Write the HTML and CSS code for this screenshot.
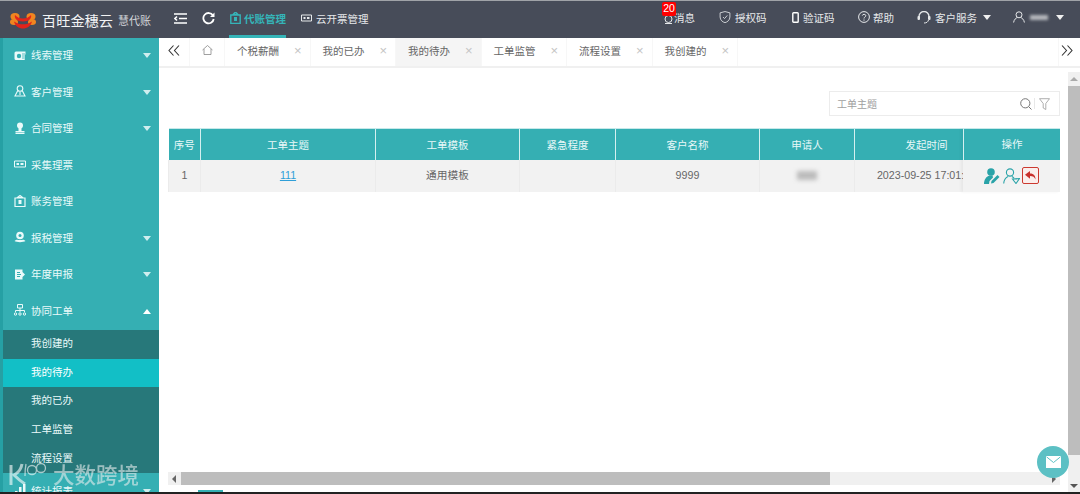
FILE: index.html
```html
<!DOCTYPE html>
<html lang="zh-CN">
<head>
    <meta charset="UTF-8">
    <title>百旺金穗云</title>
    <link rel="stylesheet" href="styles.css">
</head>
<body>

    <!-- Top bar -->
    <div class="topbar">
        <div class="brand">
            <svg class="brand-logo" viewBox="0 0 26 17">
                <ellipse cx="5" cy="4.500" rx="4.500" ry="3.500" fill="#f0851f"/>
                <ellipse cx="21" cy="4.500" rx="4.500" ry="3.500" fill="#f0851f"/>
                <ellipse cx="4" cy="10" rx="4" ry="3" fill="#f0851f"/>
                <ellipse cx="22" cy="10" rx="4" ry="3" fill="#f0851f"/>
                <path d="M5 3c2 2.500 5 3.500 8 3.500S19 5.500 21 3c1 3-2 6.500-8 6.500S4 6 5 3z" fill="#e2231a"/>
                <path d="M4 9.500c3 2 6 2.800 9 2.800s6-.8 9-2.800c-1 4.500-5 7-9 7s-8-2.500-9-7z" fill="#e2231a"/>
            </svg>
            <span class="brand-name">百旺金穗云</span>
            <span class="brand-sub">慧代账</span>
        </div>
        <svg class="tool-icon indent" viewBox="0 0 13 11"><path d="M0 1h13M5 5.500h8M0 10h13M3 3.500 1 5.500l2 2" fill="none" stroke="#fff" stroke-width="1.600"/></svg>
        <svg class="tool-icon refresh" viewBox="0 0 13 13"><path d="M11 3.500A5.200 5.200 0 1 0 11.700 7" fill="none" stroke="#fff" stroke-width="1.800"/><path d="M12.500.5v4.500H8z" fill="#fff"/></svg>
        <div class="top-tab active">
            <svg viewBox="0 0 11 12"><path d="M5.500 0 8 2.500H3zM.8 3h9.400v8.500H.8z" fill="none" stroke="#35b4b8" stroke-width="1.400"/><path d="M4 5h3v4H4z" fill="#35b4b8"/></svg>
            代账管理
        </div>
        <div class="top-tab">
            <svg viewBox="0 0 11 8"><path d="M.5 1h10v6H.5z" fill="none" stroke="#e6e8ea"/><path d="M2.500 3h2v2h-2zM6 3h2.500v2H6z" fill="#e6e8ea"/></svg>
            云开票管理
        </div>

        <div class="top-right">
            <div class="top-link link-msg">
                <svg class="icon-msg" viewBox="0 0 9 10"><circle cx="4.500" cy="5" r="3.500" fill="none" stroke="#e6e8ea"/><path d="M1 9.500h7" stroke="#e6e8ea"/></svg>
                消息
                <span class="badge">20</span>
            </div>
            <div class="top-link link-auth">
                <svg class="icon-12" viewBox="0 0 12 13"><path d="M6 .6 11.300 2v4.500C11.300 10 8.500 12 6 12.600 3.500 12 .7 10 .7 6.500V2z" fill="none" stroke="#d5d8db"/><path d="M3.800 6.500 5.500 8.200 8.500 4.800" fill="none" stroke="#d5d8db"/></svg>
                授权码
            </div>
            <div class="top-link link-code">
                <svg class="icon-phone" viewBox="0 0 7 11"><rect x=".8" y=".8" width="5.400" height="9.400" rx=".8" fill="none" stroke="#fff" stroke-width="1.400"/></svg>
                验证码
            </div>
            <div class="top-link link-help">
                <svg class="icon-12" viewBox="0 0 12 12"><circle cx="6" cy="6" r="5.400" fill="none" stroke="#e6e8ea"/><path d="M4.300 4.600C4.500 2.800 7.800 2.900 7.800 4.700 7.800 6 6 6 6 7.500M6 8.500v1.200" fill="none" stroke="#e6e8ea"/></svg>
                帮助
            </div>
            <div class="top-link link-service">
                <svg class="icon-service" viewBox="0 0 14 13"><path d="M2 7V5.500a5 5 0 0 1 10 0V7" fill="none" stroke="#e6e8ea" stroke-width="1.300"/><rect x=".5" y="5" width="2.500" height="4" rx="1" fill="#e6e8ea"/><rect x="11" y="5" width="2.500" height="4" rx="1" fill="#e6e8ea"/><path d="M11.500 9c-.5 2-2 3-4.500 3" fill="none" stroke="#e6e8ea"/></svg>
                客户服务
                <i class="caret"></i>
            </div>
            <div class="top-link link-user">
                <svg class="icon-12" viewBox="0 0 12 12"><circle cx="6" cy="3.800" r="3" fill="none" stroke="#e6e8ea"/><path d="M.6 11.500C1 8.500 3 7 4.300 6.500M11.400 11.500C11 8.500 9 7 7.700 6.500" fill="none" stroke="#e6e8ea"/></svg>
                <span class="blur-name"></span>
                <i class="caret"></i>
            </div>
        </div>
    </div>

    <div class="layout">
        <!-- Side menu -->
        <div class="sidebar">
            <div class="menu-item">
                <svg viewBox="0 0 12 12"><path d="M2 2.500h9.500v3H11V10a1 1 0 0 1-1 1H2a1.500 1.500 0 0 1-1.500-1.500v-5.500A1.500 1.500 0 0 1 2 2.500z" fill="#eafafa"/><circle cx="5" cy="7" r="2.200" fill="#35afb3"/><path d="M8 4h3v6H8z" fill="#35afb3" opacity=".4"/></svg>
                <span>线索管理</span><i class="arrow down"></i>
            </div>
            <div class="menu-item">
                <svg viewBox="0 0 12 12"><circle cx="6" cy="3.500" r="2.800" fill="none" stroke="#eafafa" stroke-width="1.100"/><path d="M3.800 5.500 1 11h10L8.200 5.500M6 7v3" fill="none" stroke="#eafafa" stroke-width="1.100"/></svg>
                <span>客户管理</span><i class="arrow down"></i>
            </div>
            <div class="menu-item">
                <svg viewBox="0 0 12 12"><circle cx="6" cy="3.500" r="3" fill="#eafafa"/><path d="M4.500 6h3v3h3v1.500h-9V9h3zM1.500 11h9v1h-9z" fill="#eafafa"/></svg>
                <span>合同管理</span><i class="arrow down"></i>
            </div>
            <div class="menu-item">
                <svg viewBox="0 0 12 8"><path d="M.5 1h11v6H.5z" fill="none" stroke="#eafafa"/><path d="M2.500 3h2.500v2H2.500zM6.500 3h3v2h-3z" fill="#eafafa"/></svg>
                <span>采集理票</span>
            </div>
            <div class="menu-item">
                <svg viewBox="0 0 12 12"><path d="M6 .5 8.500 2.500h-5zM1 3h10v8.500H1z" fill="none" stroke="#eafafa" stroke-width="1.200"/><path d="M4.500 5h3v4h-3z" fill="#eafafa"/></svg>
                <span>账务管理</span>
            </div>
            <div class="menu-item">
                <svg viewBox="0 0 12 12"><circle cx="6" cy="4.500" r="3.800" fill="#eafafa"/><circle cx="6" cy="4.500" r="1.500" fill="#35afb3"/><path d="M.5 10c2-2 3-1 5.500-1s3.500-1 5.500 1c-2 1.500-9 1.500-11 0z" fill="#eafafa"/></svg>
                <span>报税管理</span><i class="arrow down"></i>
            </div>
            <div class="menu-item">
                <svg viewBox="0 0 12 12"><path d="M1 1.500h7.500V4L11 6.500 8.500 9v2.500H1z" fill="#eafafa"/><path d="M3 4.500h3M3 6.500h4M3 8.500h3" stroke="#35afb3"/></svg>
                <span>年度申报</span><i class="arrow down"></i>
            </div>
            <div class="menu-item">
                <svg viewBox="0 0 12 12"><path d="M3.500 .5h5v3.500h-5zM6 4v2.500M1.500 8V6.500h9V8M6 6.500V8" fill="none" stroke="#eafafa"/><circle cx="1.500" cy="10" r="1.200" fill="none" stroke="#eafafa"/><circle cx="6" cy="10" r="1.200" fill="none" stroke="#eafafa"/><circle cx="10.500" cy="10" r="1.200" fill="none" stroke="#eafafa"/></svg>
                <span>协同工单</span><i class="arrow up"></i>
            </div>
            <div class="submenu">
                <div class="sub-item">我创建的</div>
                <div class="sub-item selected">我的待办</div>
                <div class="sub-item">我的已办</div>
                <div class="sub-item">工单监管</div>
                <div class="sub-item">流程设置</div>
            </div>
            <div class="menu-item">
                <svg viewBox="0 0 12 12"><path d="M1 7h2.500v5H1zM5 3h2.500v9H5zM9 0h2.500v12H9z" fill="#eafafa"/></svg>
                <span>统计报表</span><i class="arrow down"></i>
            </div>
        </div>

        <div class="main">
            <!-- Tabs -->
            <div class="tabs">
                <div class="tab-btn first">
                    <svg viewBox="0 0 12 11"><path d="M5.500.5 1 5.500l4.500 5M11 .5 6.500 5.500l4.500 5" fill="none" stroke="#333" stroke-width="1.100"/></svg>
                </div>
                <div class="tab-home">
                    <svg viewBox="0 0 11 10"><path d="M.5 5 5.500.5l5 4.500M2 4v5.500h7V4" fill="none" stroke="#888" stroke-width=".8"/></svg>
                </div>
                <div class="tab">个税薪酬<i class="close">×</i></div>
                <div class="tab">我的已办<i class="close">×</i></div>
                <div class="tab current">我的待办<i class="close">×</i></div>
                <div class="tab">工单监管<i class="close">×</i></div>
                <div class="tab">流程设置<i class="close">×</i></div>
                <div class="tab">我创建的<i class="close">×</i></div>
                <div class="tab-btn last">
                    <svg viewBox="0 0 12 11"><path d="M1 .5l4.500 5L1 10.500M6.500 .5l4.500 5-4.500 5" fill="none" stroke="#333" stroke-width="1.100"/></svg>
                </div>
            </div>

            <div class="page">
                <div class="content">
                    <div class="search-row">
                        <div class="search-box">
                            <span class="search-text">工单主题</span>
                            <svg class="search-icon" viewBox="0 0 12 12"><circle cx="5.300" cy="5.300" r="4.600" fill="none" stroke="#777"/><path d="M8.600 8.600 11.500 11.500" stroke="#777"/></svg>
                            <i class="search-sep"></i>
                            <svg class="filter-icon" viewBox="0 0 11 12"><path d="M.5.700h10L6.800 5.500v6L4.200 10V5.500z" fill="none" stroke="#999" stroke-width=".8"/></svg>
                        </div>
                    </div>

                    <div class="table-wrap">
                        <table class="grid">
                            <colgroup>
                                <col class="c-no"><col class="c-title"><col class="c-tpl"><col class="c-urgent">
                                <col class="c-cust"><col class="c-user"><col class="c-time"><col class="c-rest">
                            </colgroup>
                            <thead>
                                <tr><th>序号</th><th>工单主题</th><th>工单模板</th><th>紧急程度</th><th>客户名称</th><th>申请人</th><th>发起时间</th><th></th></tr>
                            </thead>
                            <tbody>
                                <tr>
                                    <td>1</td>
                                    <td><a class="row-link">111</a></td>
                                    <td>通用模板</td>
                                    <td></td>
                                    <td>9999</td>
                                    <td><span class="blur-cell"></span></td>
                                    <td>2023-09-25 17:01:22</td>
                                    <td></td>
                                </tr>
                            </tbody>
                        </table>

                        <!-- Fixed column floats over the scrolling table -->
                        <div class="fixed-col">
                            <div class="fixed-head">操作</div>
                            <div class="fixed-cell">
                                <svg class="op-icon" viewBox="0 0 17 16"><circle cx="7" cy="4" r="3.800" fill="#2aa3a8"/><path d="M5.500 7.500h3L9 9.500 5.500 13 5 16H0c0-4 2-7.500 5.500-8.500z" fill="#2aa3a8"/><path d="M7 15.500l.5-2.500 6-6 2 2-6 6z" fill="#2aa3a8"/></svg>
                                <svg class="op-icon" viewBox="0 0 17 16"><circle cx="7" cy="4.500" r="3.600" fill="none" stroke="#2aa3a8" stroke-width="1.100"/><path d="M.7 15.500C1 11.500 3 9.500 5 8.500M9 8.500c.8.400 1.500 1 2 1.600" fill="none" stroke="#2aa3a8" stroke-width="1.100"/><path d="M9.500 11 16.500 10.500 13 15.500z" fill="none" stroke="#2aa3a8" stroke-width="1.100"/></svg>
                                <span class="reply-btn">
                                    <svg viewBox="0 0 11 9"><path d="M5 0v2.500c4 0 5.500 2.500 5.500 6C9.500 6 8 5 5 5v2.800L0 3.800z" fill="#c9302c"/></svg>
                                </span>
                            </div>
                        </div>
                    </div>

                    <div class="h-scroll">
                        <i class="sb-arrow left"></i>
                        <div class="h-thumb"></div>
                        <i class="sb-arrow right"></i>
                    </div>
                </div>

                <div class="v-scroll">
                    <i class="sb-arrow top"></i>
                    <div class="v-thumb"></div>
                    <i class="sb-arrow bottom"></i>
                </div>
            </div>
        </div>
    </div>

    <div class="footer-bar"><span class="footer-mark"></span></div>

    <div class="chat-btn">
        <svg viewBox="0 0 15 12"><path d="M0 0h15v12H0z" fill="#fff"/><path d="M.5 .8 7.500 6.500 14.500 .8" fill="none" stroke="#5cc0c4"/></svg>
    </div>

    <div class="watermark">
        <svg viewBox="0 0 38 26"><path d="M2 4v20" fill="none" stroke="#fff" stroke-width="3"/><path d="M13 3C12 9 9 12 5 14c3 3 6 6 11 9" fill="none" stroke="#fff" stroke-width="3"/><path d="M17 3c-1 5-1 8-1 12" fill="none" stroke="#fff" stroke-width="1.300"/><circle cx="23" cy="9" r="4.500" fill="none" stroke="#fff" stroke-width="1.300"/><circle cx="32" cy="7" r="4.500" fill="none" stroke="#fff" stroke-width="1.300"/></svg>
        <span>大数跨境</span>
    </div>

</body>
</html>
```

FILE: styles.css
```css
html, body {
    height: 100%;
}

body {
    margin: 0;
    width: 1080px;
    height: 494px;
    overflow: hidden;
    position: relative;
    display: flex;
    flex-direction: column;
    font-family: "Liberation Sans", "Noto Sans CJK SC", sans-serif;
    font-size: 10.5px;
    color: #666;
    background-color: #fff;
}

svg {
    display: block;
    flex: none;
}

/* Top bar */
.topbar {
    height: 37px;
    flex: none;
    border-top: 1px solid #a0a3a8;
    background-color: #474c59;
    display: flex;
    align-items: center;
    color: #e6e8ea;
    white-space: nowrap;
}

.brand {
    width: 159px;
    flex: none;
    display: flex;
    align-items: center;
    padding-left: 10px;
    box-sizing: border-box;
    margin-top: 1px;
}

.brand-logo {
    width: 26px;
    height: 17px;
}

.brand-name {
    margin-left: 6px;
    font-size: 14.2px;
    color: #f2f3f4;
}

.brand-sub {
    margin-left: 5px;
    font-size: 11px;
    color: #d2d4d8;
}

.tool-icon {
    margin-top: -2px;
}

.tool-icon.indent {
    width: 13px;
    height: 11px;
    margin-left: 15px;
}

.tool-icon.refresh {
    width: 13px;
    height: 13px;
    margin-left: 15px;
}

.top-tab {
    height: 34px;
    box-sizing: border-box;
    display: flex;
    align-items: center;
    gap: 4px;
    font-size: 10.5px;
    margin-bottom: 3px;
}

.top-tab svg {
    width: 11px;
}

.top-tab.active {
    margin-left: 14px;
    margin-bottom: 0;
    margin-top: 3px;
    width: 57px;
    color: #35b4b8;
    font-weight: bold;
    border-bottom: 3px solid #35b4b8;
    padding-bottom: 3px;
    padding-left: 1px;
    gap: 3px;
}

.top-tab.active svg {
    height: 12px;
}

.top-tab:not(.active) {
    margin-left: 15px;
}

.top-right {
    margin-left: auto;
    display: flex;
    align-items: center;
    height: 100%;
    padding-bottom: 5px;
    box-sizing: border-box;
}

.top-link {
    position: relative;
    display: flex;
    align-items: center;
    gap: 3px;
}

.link-msg {
    width: 55px;
    gap: 1px;
}

.link-auth {
    width: 73px;
    gap: 4px;
}

.link-code {
    width: 66px;
}

.link-help {
    width: 59px;
}

.link-service {
    width: 96px;
}

.link-user {
    width: 67px;
    gap: 5px;
}

.icon-msg {
    width: 9px;
    height: 10px;
    margin-top: 3px;
}

.icon-12 {
    width: 12px;
    height: 12px;
}

.icon-phone {
    width: 7px;
    height: 11px;
    margin-right: 1px;
}

.icon-service {
    width: 14px;
    height: 13px;
    margin-right: 1px;
}

.caret {
    width: 0;
    height: 0;
    margin-left: 3px;
    border-left: 4px solid transparent;
    border-right: 4px solid transparent;
    border-top: 5px solid #f0f0f0;
}

.blur-name {
    width: 18px;
    height: 5px;
    background-color: #b6b8bd;
    filter: blur(1.500px);
}

.badge {
    position: absolute;
    left: -2px;
    top: -8px;
    width: 14px;
    height: 14px;
    background-color: #f00;
    border-radius: 2px;
    color: #fff;
    font-size: 10.5px;
    line-height: 13px;
    text-align: center;
}

/* Layout */
.layout {
    flex: 1;
    min-height: 0;
    display: flex;
}

/* Side menu */
.sidebar {
    width: 159px;
    flex: none;
    overflow: hidden;
    background-color: #35afb3;
    border-left: 3px solid #26a0a4;
    box-sizing: border-box;
    color: #eafafa;
}

.menu-item {
    height: 36.500px;
    display: flex;
    align-items: center;
    padding: 0 8px 3px 11px;
    box-sizing: border-box;
}

.menu-item svg {
    width: 12px;
    height: 12px;
}

.menu-item span {
    margin-left: 5px;
}

.arrow {
    width: 0;
    height: 0;
    margin-left: auto;
    margin-top: 2px;
    border-left: 4.500px solid transparent;
    border-right: 4.500px solid transparent;
}

.arrow.down {
    border-top: 5px solid #cfeeef;
}

.arrow.up {
    border-bottom: 5px solid #fff;
}

.submenu {
    background-color: #27787a;
    margin-left: -3px;
    padding-left: 3px;
}

.sub-item {
    height: 28.700px;
    line-height: 27px;
    padding-left: 28px;
}

.sub-item.selected {
    margin-left: -3px;
    padding-left: 28px;
    background-color: #12bfc6;
    border-left: 3px solid #8aeaea;
    color: #fff;
}

/* Main column */
.main {
    flex: 1;
    min-width: 0;
    display: flex;
    flex-direction: column;
}

.tabs {
    height: 28px;
    flex: none;
    display: flex;
    border-bottom: 2px solid #f0f0f0;
    background-color: #fff;
    color: #666;
}

.tab-btn {
    width: 31px;
    flex: none;
    display: flex;
    align-items: center;
    justify-content: center;
    box-sizing: border-box;
    padding-bottom: 4px;
}

.tab-btn svg {
    width: 12px;
    height: 11px;
}

.tab-btn.first {
    border-right: 1px solid #f7f7f7;
}

.tab-btn.last {
    margin-left: auto;
    width: 22px;
    padding-right: 6px;
    border-left: 1px solid #f7f7f7;
}

.tab-home {
    width: 35px;
    flex: none;
    display: flex;
    align-items: center;
    justify-content: center;
    border-right: 1px solid #f7f7f7;
    box-sizing: border-box;
    padding-bottom: 4px;
}

.tab-home svg {
    width: 11px;
    height: 10px;
}

.tab {
    width: 85.500px;
    flex: none;
    display: flex;
    align-items: center;
    padding: 0 0 4px 12px;
    box-sizing: border-box;
    border-right: 1px solid #f7f7f7;
}

.tab.current {
    background-color: #f5f5f5;
}

.close {
    margin-left: 15px;
    font-style: normal;
    font-size: 13px;
    color: #c4c4c4;
}

.page {
    flex: 1;
    min-height: 0;
    display: flex;
    position: relative;
}

.content {
    flex: 1;
    min-width: 0;
    display: flex;
    flex-direction: column;
    padding: 0 8px 7px 9px;
}

.search-row {
    display: flex;
    justify-content: flex-end;
    padding-top: 23px;
    height: 60px;
    box-sizing: border-box;
    flex: none;
}

.search-box {
    width: 231px;
    height: 25px;
    box-sizing: border-box;
    border: 1px solid #ececec;
    display: flex;
    align-items: center;
    padding: 0 9px 0 7px;
    color: #a0a0a0;
    font-size: 10px;
}

.search-text {
    flex: 1;
}

.search-icon {
    width: 12px;
    height: 12px;
}

.search-sep {
    width: 1px;
    height: 11px;
    margin-left: 2px;
    background-color: #e8e8e8;
}

.filter-icon {
    width: 11px;
    height: 12px;
    margin-left: 4px;
}

/* Table */
.table-wrap {
    flex: 1;
    min-height: 0;
    position: relative;
    overflow: hidden;
}

.grid {
    width: 1100px;
    table-layout: fixed;
    border-collapse: collapse;
}

.c-no { width: 32px; }
.c-title { width: 175px; }
.c-tpl { width: 144px; }
.c-urgent { width: 96px; }
.c-cust { width: 144px; }
.c-user { width: 95px; }
.c-time { width: 144px; }
.c-rest { width: 270px; }

.grid th {
    height: 31px;
    padding: 0;
    background-color: #35afb3;
    color: #e8f8f8;
    font-weight: normal;
    border-left: 1px solid #d5f0f0;
    border-top: 1px solid #c6e9ea;
}

.grid th:first-child {
    border-left: none;
}

.grid td {
    height: 32px;
    padding: 0 0 3px;
    box-sizing: border-box;
    background-color: #f2f2f2;
    text-align: center;
    border-left: 1px solid #ebebeb;
    color: #666;
    white-space: nowrap;
    font-size: 10.700px;
}

.row-link {
    color: #2f9fd8;
    text-decoration: underline;
}

.blur-cell {
    display: inline-block;
    width: 20px;
    height: 9px;
    vertical-align: middle;
    background-color: #bbb;
    filter: blur(2px);
}

.fixed-col {
    position: absolute;
    right: 0;
    top: 0;
    width: 97px;
    box-shadow: -2px 0 3px rgba(0, 0, 0, 0.05);
}

.fixed-head {
    height: 31px;
    line-height: 31px;
    text-align: center;
    background-color: #35afb3;
    color: #e8f8f8;
    border-left: 1px solid #d5f0f0;
    border-top: 1px solid #c6e9ea;
}

.fixed-cell {
    height: 32px;
    background-color: #f2f2f2;
    display: flex;
    align-items: center;
    padding: 0 0 1px 21px;
    gap: 2px;
    box-sizing: border-box;
}

.op-icon {
    width: 17px;
    height: 16px;
}

.reply-btn {
    width: 17px;
    height: 17px;
    box-sizing: border-box;
    border: 1.500px solid #cc3a30;
    border-radius: 2px;
    background-color: #fbeeec;
    display: flex;
    align-items: center;
    justify-content: center;
}

.reply-btn svg {
    width: 11px;
    height: 9px;
}

/* Scrollbars */
.h-scroll {
    height: 13px;
    flex: none;
    background-color: #f0f0f0;
    display: flex;
    align-items: center;
    position: relative;
}

.h-thumb {
    width: 649px;
    height: 100%;
    margin-left: 13px;
    background-color: #bdbdbd;
}

.sb-arrow {
    width: 0;
    height: 0;
    flex: none;
    position: absolute;
}

.sb-arrow.left {
    left: 4px;
    border-top: 4px solid transparent;
    border-bottom: 4px solid transparent;
    border-right: 4px solid #666;
}

.sb-arrow.right {
    right: 4px;
    border-top: 4px solid transparent;
    border-bottom: 4px solid transparent;
    border-left: 4px solid #666;
}

.v-scroll {
    width: 12px;
    flex: none;
    margin-top: 4px;
    background-color: #f0f0f0;
    position: relative;
}

.v-thumb {
    position: absolute;
    left: 0;
    right: 0;
    top: 14px;
    bottom: 37px;
    background-color: #bdbdbd;
}

.sb-arrow.top {
    left: 2px;
    top: 5px;
    border-left: 4px solid transparent;
    border-right: 4px solid transparent;
    border-bottom: 4px solid #aaa;
}

.sb-arrow.bottom {
    left: 2px;
    bottom: 4px;
    border-left: 4px solid transparent;
    border-right: 4px solid transparent;
    border-top: 4px solid #555;
}

/* Bottom edge */
.footer-bar {
    height: 2px;
    flex: none;
    background-color: #222;
    position: relative;
}

.footer-mark {
    position: absolute;
    left: 198px;
    top: -2px;
    width: 25px;
    height: 2px;
    background-color: #35afb3;
}

/* Floating things */
.chat-btn {
    position: absolute;
    left: 1037px;
    top: 446px;
    width: 32px;
    height: 32px;
    border-radius: 50%;
    background-color: #5cc0c4;
    display: flex;
    align-items: center;
    justify-content: center;
}

.chat-btn svg {
    width: 15px;
    height: 12px;
}

.watermark {
    position: absolute;
    left: 9px;
    top: 460px;
    display: flex;
    align-items: center;
    gap: 6px;
    opacity: 0.6;
    color: #e8eeee;
    font-family: "Noto Sans CJK SC", sans-serif;
    font-weight: 500;
    font-size: 21.500px;
    line-height: 28px;
    pointer-events: none;
}

.watermark svg {
    width: 38px;
    height: 26px;
}
```
